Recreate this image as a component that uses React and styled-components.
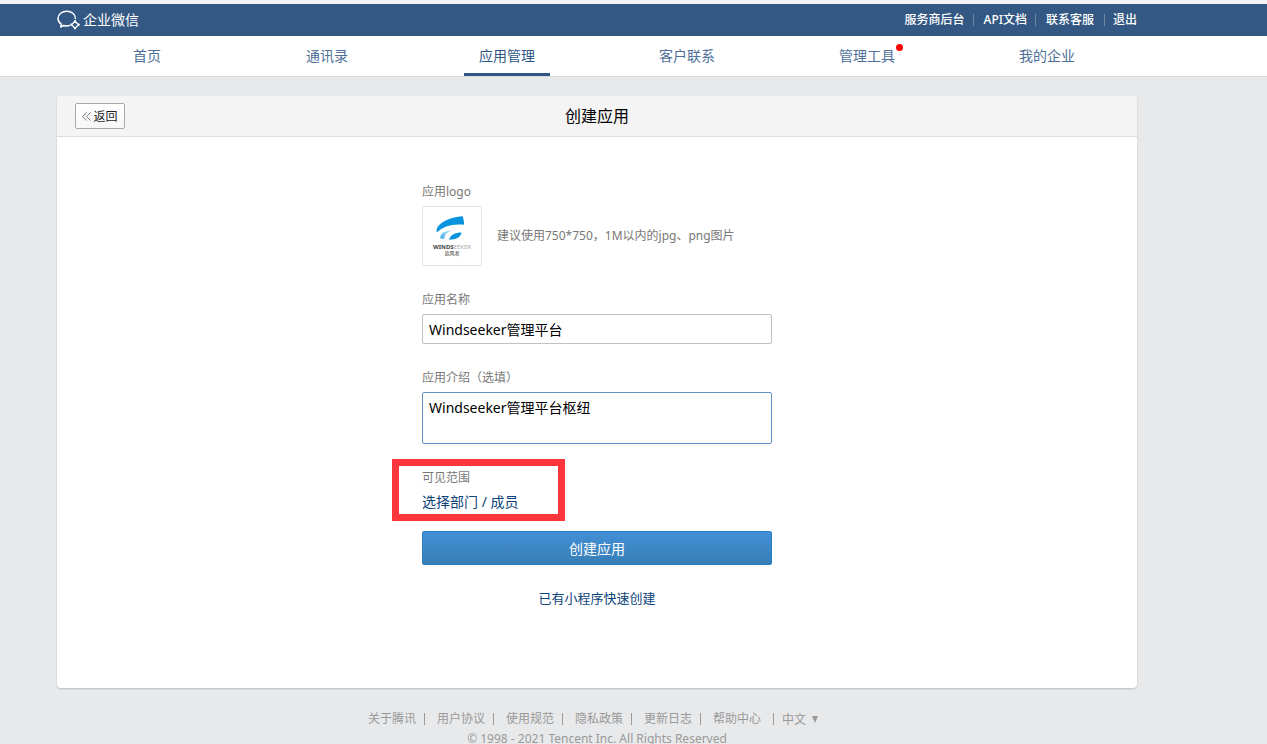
import { useState } from "react";
import styled, { createGlobalStyle } from "styled-components";

const navItems = [
  { name: "首页" },
  { name: "通讯录" },
  { name: "应用管理", active: true },
  { name: "客户联系" },
  { name: "管理工具", dot: true },
  { name: "我的企业" },
];

const topLinks = ["服务商后台", "API文档", "联系客服"];

const footerLinks = ["关于腾讯", "用户协议", "使用规范", "隐私政策", "更新日志", "帮助中心"];

function BrandIcon() {
  return (
    <svg width="24" height="20" viewBox="0 0 24 20" fill="none" stroke="#ffffff">
      <path
        d="M12.500 15.600c-1.900.5-4 .5-5.900-.1L3.700 17l.5-2.900C2.200 12.600 1 10.600 1 8.400 1 4.300 5 1.200 9.800 1.200s8.600 3.100 8.600 7.200"
        strokeWidth="1.500"
        strokeLinecap="round"
        strokeLinejoin="round"
      />
      <path d="M18 11.200l3.500 3.500-3.500 3.500-3.500-3.500z" strokeWidth="1.300" strokeLinejoin="round" />
      <circle cx="18" cy="11.200" r="1.100" fill="#ffffff" stroke="none" />
      <circle cx="21.800" cy="14.700" r="1.100" fill="#ffffff" stroke="none" />
      <circle cx="18" cy="18.400" r="1.100" fill="#ffffff" stroke="none" />
      <circle cx="14.300" cy="14.700" r="1.100" fill="#ffffff" stroke="none" />
    </svg>
  );
}

function WindLogo() {
  return (
    <svg width="40" height="26" viewBox="0 0 40 26">
      <defs>
        <linearGradient id="fade" x1="0" y1="1" x2="1" y2="0">
          <stop offset="0" stopColor="#3aa9e8" />
          <stop offset="1" stopColor="#cfeafa" />
        </linearGradient>
      </defs>
      <path d="M5 17.500C2.500 10 15 2.500 30.500 1.200C31.500 3.500 32 6.500 32.200 9.800C20 8.500 11 11.500 5 17.500z" fill="#0793de" />
      <path d="M8.300 23.500C8 18.500 12 15.500 20.500 15.200C15.500 17 12.500 19.500 12.300 23.700z" fill="url(#fade)" />
      <path d="M17 24.800C18.500 20 23 17.600 29.500 17.600C28.500 22.500 24 24.800 17 24.800z" fill="#0793de" />
    </svg>
  );
}

export default function App() {
  const [name, setName] = useState("Windseeker管理平台");
  const [intro, setIntro] = useState("Windseeker管理平台枢纽");

  return (
    <>
      <GlobalStyle />
      <TopBar>
        <Brand href="#">
          <BrandIcon />
          <span>企业微信</span>
        </Brand>
        <TopLinks>
          {topLinks.map((link) => (
            <TopLink href="#" key={link}>{link}</TopLink>
          ))}
          <Logout href="#">退出</Logout>
        </TopLinks>
      </TopBar>

      <Nav>
        {navItems.map((item) => (
          <NavItem key={item.name}>
            <NavLink href="#" $active={item.active}>
              {item.name}
              {item.dot && <Dot />}
            </NavLink>
          </NavItem>
        ))}
      </Nav>

      <Main>
        <Card>
          <CardHeader>
            <BackButton type="button">
              <svg width="9" height="9" viewBox="0 0 9 9" fill="none" stroke="#777777">
                <path d="M4.500 0.500L0.700 4.500l3.800 4M8.500 0.500L4.700 4.500l3.800 4" />
              </svg>
              返回
            </BackButton>
            <Title>创建应用</Title>
          </CardHeader>

          <Form onSubmit={(e) => e.preventDefault()}>
            <Field>
              <Label as="span">应用logo</Label>
              <LogoRow>
                <LogoButton type="button" aria-label="应用logo">
                  <WindLogo />
                  <LogoName><b>WINDS</b>EEKER</LogoName>
                  <LogoSub>追风者</LogoSub>
                </LogoButton>
                <Hint>建议使用750*750，1M以内的jpg、png图片</Hint>
              </LogoRow>
            </Field>

            <Field>
              <Label htmlFor="name">应用名称</Label>
              <Input id="name" value={name} onChange={(e) => setName(e.target.value)} />
            </Field>

            <Field>
              <Label htmlFor="intro">应用介绍（选填）</Label>
              <TextArea id="intro" value={intro} onChange={(e) => setIntro(e.target.value)} />
            </Field>

            <ScopeField>
              <Label as="span">可见范围</Label>
              <ScopeLink href="#">选择部门 / 成员</ScopeLink>
            </ScopeField>

            <SubmitButton type="submit">创建应用</SubmitButton>
            <QuickLink href="#">已有小程序快速创建</QuickLink>
          </Form>
        </Card>

        <Footer>
          <FooterLinks>
            {footerLinks.map((link) => (
              <FooterLink href="#" key={link}>{link}</FooterLink>
            ))}
            <Language>
              <select aria-label="语言" defaultValue="zh">
                <option value="zh">中文</option>
                <option value="en">English</option>
              </select>
              <svg width="6" height="7" viewBox="0 0 6 7">
                <path d="M0 0h6L3 7z" fill="#999999" />
              </svg>
            </Language>
          </FooterLinks>
          <Copyright>© 1998 - 2021 Tencent Inc. All Rights Reserved</Copyright>
        </Footer>
      </Main>
    </>
  );
}

const GlobalStyle = createGlobalStyle`
  *, *::before, *::after {
    box-sizing: border-box;
  }

  body {
    margin: 0;
    background: #e8e9eb;
    font-family: "Noto Sans", "Noto Sans CJK SC", sans-serif;
    font-size: 12px;
    line-height: 20px;
    color: #787878;
  }

  a {
    text-decoration: none;
  }

  button, input, textarea, select {
    font-family: inherit;
  }
`;

const TopBar = styled.header`
  display: flex;
  align-items: center;
  justify-content: space-between;
  height: 36px;
  padding: 0 130px 0 57px;
  background: #335883;
  border-top: 4px solid #f1f5f5;
`;

const Brand = styled.a`
  display: flex;
  align-items: center;
  gap: 2px;
  color: #ffffff;
  font-size: 14px;
`;

const TopLinks = styled.nav`
  display: flex;
  align-items: center;
`;

const TopLink = styled.a`
  display: flex;
  align-items: center;
  color: #ffffff;
  font-weight: 500;

  &::after {
    content: "";
    width: 1px;
    height: 12px;
    margin: 0 10px 0 8px;
    background: #7088a6;
  }

  &:nth-last-of-type(2)::after {
    margin: 0 8px 0 10px;
  }
`;

const Logout = styled(TopLink)`
  &::after {
    display: none;
  }
`;

const Nav = styled.nav`
  display: flex;
  height: 41px;
  padding: 0 130px 0 57px;
  background: #ffffff;
  border-bottom: 1px solid #d9dcdc;
`;

const NavItem = styled.div`
  flex: 1;
  display: flex;
  justify-content: center;
`;

const NavLink = styled.a`
  position: relative;
  padding: 0 15px;
  line-height: 40px;
  font-size: 14px;
  color: ${(props) => (props.$active ? "#2f5785" : "#4d6f98")};
  box-shadow: ${(props) => (props.$active ? "inset 0 -3px 0 #2f5785" : "none")};
`;

const Dot = styled.i`
  position: absolute;
  top: 8px;
  right: 7px;
  width: 7px;
  height: 7px;
  border-radius: 50%;
  background: #ff0000;
`;

const Main = styled.main`
  padding: 19px 130px 0 57px;
`;

const Card = styled.section`
  background: #ffffff;
  border-radius: 4px;
  box-shadow: 0 1px 2px rgba(0, 0, 0, 0.2);
`;

const CardHeader = styled.div`
  display: grid;
  grid-template-columns: 1fr auto 1fr;
  align-items: center;
  height: 41px;
  padding: 0 18px;
  background: #f4f4f4;
  border-bottom: 1px solid #dcdfe2;
  border-radius: 4px 4px 0 0;
`;

const BackButton = styled.button`
  display: flex;
  align-items: center;
  justify-content: center;
  justify-self: start;
  gap: 2px;
  width: 50px;
  height: 26px;
  padding: 0;
  border: 1px solid #a9a9a9;
  border-radius: 2px;
  background: linear-gradient(#ffffff, #f7f7f7);
  color: #222222;
  font-size: 12px;
`;

const Title = styled.h1`
  margin: 0;
  color: #000000;
  font-size: 16px;
  font-weight: 400;
`;

const Form = styled.form`
  display: flex;
  flex-direction: column;
  max-width: 350px;
  margin: 0 auto;
  padding: 45px 0 80px;
`;

const Field = styled.div`
  display: flex;
  flex-direction: column;
  align-items: stretch;
  gap: 4px;
  margin-bottom: 24px;
`;

const Label = styled.label`
  color: #787878;
`;

const LogoRow = styled.div`
  display: flex;
  align-items: center;
  gap: 15px;
`;

const LogoButton = styled.button`
  display: flex;
  flex-direction: column;
  align-items: center;
  width: 60px;
  height: 60px;
  padding: 8px 0 0;
  border: 1px solid #e4e4e4;
  border-radius: 3px;
  background: #ffffff;
`;

const LogoName = styled.span`
  margin-top: 3px;
  font-size: 6px;
  line-height: 6px;
  color: #aaaaaa;

  b {
    color: #444444;
  }
`;

const LogoSub = styled.span`
  font-size: 5px;
  line-height: 6px;
  color: #333333;
`;

const Hint = styled.span`
  color: #787878;
`;

const Input = styled.input`
  height: 30px;
  padding: 0 6px;
  border: 1px solid #c2c2c2;
  border-radius: 2px;
  color: #000000;
  font-size: 14px;
  outline: none;
`;

const TextArea = styled.textarea`
  height: 52px;
  padding: 5px 6px;
  border: 1px solid #6292c4;
  border-radius: 2px;
  color: #000000;
  font-size: 14px;
  line-height: 20px;
  resize: none;
  outline: none;
`;

const ScopeField = styled(Field)`
  position: relative;
  align-items: flex-start;
  margin-bottom: 19px;

  /* red marker around the scope picker */
  &::after {
    content: "";
    position: absolute;
    top: -9px;
    left: -30px;
    width: 173px;
    height: 62px;
    border: 7px solid #fc373b;
    pointer-events: none;
  }
`;

const ScopeLink = styled.a`
  color: #0d4479;
  font-size: 14px;
`;

const SubmitButton = styled.button`
  height: 34px;
  margin-bottom: 23px;
  border: 1px solid #2780c6;
  border-radius: 2px;
  background: linear-gradient(#438fd6, #367fb6);
  color: #ffffff;
  font-size: 14px;
`;

const QuickLink = styled.a`
  align-self: center;
  color: #0d4479;
  font-size: 13px;
`;

const Footer = styled.footer`
  display: flex;
  flex-direction: column;
  align-items: center;
  padding-top: 21px;
  color: #999999;
`;

const FooterLinks = styled.div`
  display: flex;
  align-items: center;
  padding-right: 8px;
`;

const FooterLink = styled.a`
  display: flex;
  align-items: center;
  color: #999999;

  &::after {
    content: "";
    width: 1px;
    height: 12px;
    margin: 0 12px 0 8px;
    background: #999999;
  }

  &:last-of-type::after {
    margin: 0 8px 0 12px;
  }
`;

const Language = styled.label`
  display: flex;
  align-items: center;
  gap: 6px;

  select {
    width: 24px;
    padding: 0;
    border: 0;
    appearance: none;
    background: transparent;
    color: #999999;
    font-size: 12px;
  }
`;

const Copyright = styled.p`
  margin: 0;
`;
